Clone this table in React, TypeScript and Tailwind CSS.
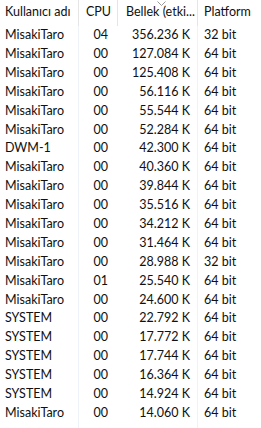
const ROWS: [string, string, string, string][] = [
  ['MisakiTaro', '04', '356.236 K', '32 bit'],
  ['MisakiTaro', '00', '127.084 K', '64 bit'],
  ['MisakiTaro', '00', '125.408 K', '64 bit'],
  ['MisakiTaro', '00', '56.116 K', '64 bit'],
  ['MisakiTaro', '00', '55.544 K', '64 bit'],
  ['MisakiTaro', '00', '52.284 K', '64 bit'],
  ['DWM-1', '00', '42.300 K', '64 bit'],
  ['MisakiTaro', '00', '40.360 K', '64 bit'],
  ['MisakiTaro', '00', '39.844 K', '64 bit'],
  ['MisakiTaro', '00', '35.516 K', '64 bit'],
  ['MisakiTaro', '00', '34.212 K', '64 bit'],
  ['MisakiTaro', '00', '31.464 K', '64 bit'],
  ['MisakiTaro', '00', '28.988 K', '32 bit'],
  ['MisakiTaro', '01', '25.540 K', '64 bit'],
  ['MisakiTaro', '00', '24.600 K', '64 bit'],
  ['SYSTEM', '00', '22.792 K', '64 bit'],
  ['SYSTEM', '00', '17.772 K', '64 bit'],
  ['SYSTEM', '00', '17.744 K', '64 bit'],
  ['SYSTEM', '00', '16.364 K', '64 bit'],
  ['SYSTEM', '00', '14.924 K', '64 bit'],
  ['MisakiTaro', '00', '14.060 K', '64 bit'],
]

export default function App() {
  return (
    <div
      className="h-[428px] w-[261px] overflow-hidden bg-white text-[12.5px] text-[#101010]"
      style={{ fontFamily: 'Lato, "Noto Sans", sans-serif' }}
    >
      <div className="grid h-[26px] grid-cols-[79px_39px_80px_63px]">
        <div className="flex items-center border-r border-[#e5e5e5] pl-[5px] pb-[1px]">Kullanıcı adı</div>
        <div className="flex items-center justify-end border-r border-[#e5e5e5] pr-[6px] pb-[1px]">CPU</div>
        <div className="relative flex items-center border-r border-[#e5e5e5] pl-[8px] pb-[1px]">
          <svg className="absolute left-[39px] top-[1px]" width="9" height="5" viewBox="0 0 9 5">
            <path d="M0.5 0.5 L4.5 4.5 L8.5 0.5" fill="none" stroke="#9a9a9a" strokeWidth="1" />
          </svg>
          <span className="truncate">Bellek (etki...</span>
        </div>
        <div className="flex items-center pl-[6px] pb-[1px]">Platform</div>
      </div>
      <div className="grid grid-cols-[79px_39px_80px_63px]">
        {ROWS.map((r, i) => (
          <div key={i} className="contents">
            <div className="flex h-[18.9px] items-center border-r border-[#eef3fa] pl-[5px]">{r[0]}</div>
            <div className="flex h-[18.9px] items-center justify-end pr-[10px]">{r[1]}</div>
            <div className="flex h-[18.9px] items-center justify-end border-r border-[#eef3fa] pr-[7px]">{r[2]}</div>
            <div className="flex h-[18.9px] items-center pl-[6px]">{r[3]}</div>
          </div>
        ))}
        <div className="h-[20px] border-r border-[#eef3fa]" />
        <div />
        <div className="h-[20px] border-r border-[#eef3fa]" />
        <div />
      </div>
    </div>
  )
}
